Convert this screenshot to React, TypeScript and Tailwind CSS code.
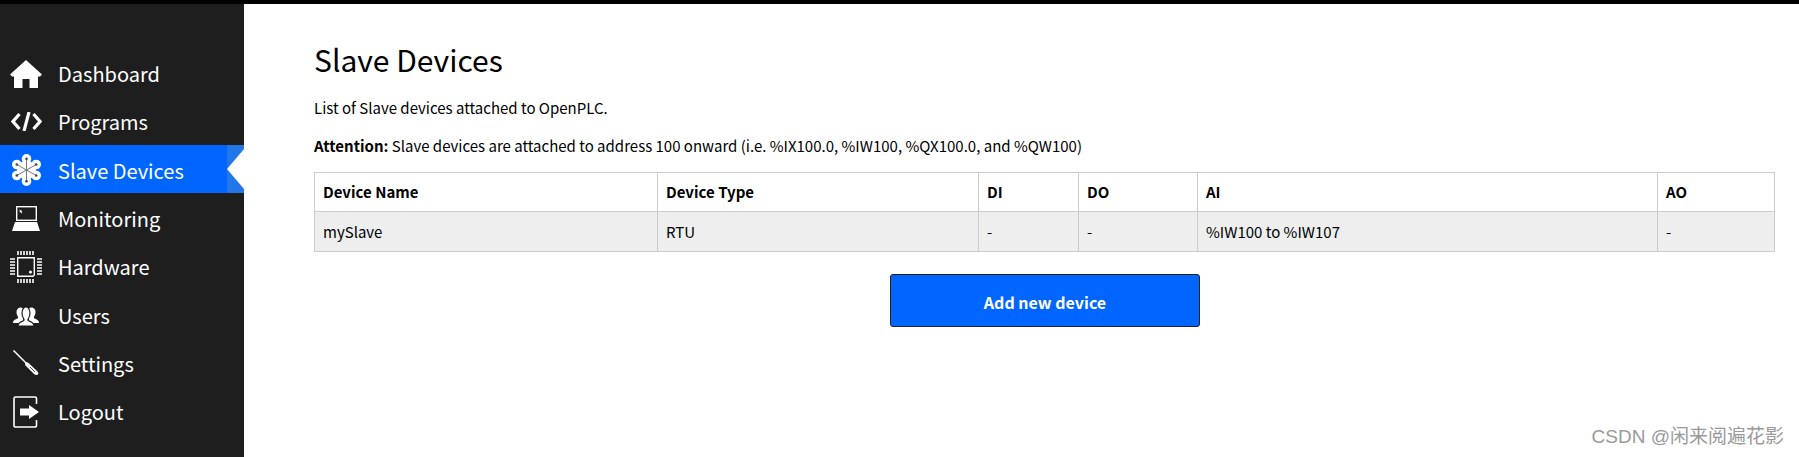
const font = "font-['Noto_Sans_CJK_SC','Noto_Sans',sans-serif]";

function HomeIcon() {
  return (
    <svg viewBox="0 0 32 28" className="h-[28px] w-[32px]">
      <path d="M16 0L32 14.500 30 16.500H28V28H19.500V19H12.500V28H4V16.500H2L0 14.500Z" fill="#fff" />
    </svg>
  );
}

function CodeIcon() {
  return (
    <svg viewBox="0 0 31 19" className="h-[19px] w-[31px]">
      <path d="M8.500 2L2 9.500 8.500 17M22.500 2L29 9.500 22.500 17" fill="none" stroke="#fff" strokeWidth="3.200" />
      <path d="M18 0L13 19" fill="none" stroke="#fff" strokeWidth="3.200" />
    </svg>
  );
}

function SlaveIcon() {
  return (
    <svg viewBox="0 0 29 32" className="h-[32px] w-[29px]">
      <g fill="#fff">
        <circle cx="14.500" cy="4.800" r="4.800" />
        <circle cx="14.500" cy="27.200" r="4.800" />
        <circle cx="4.800" cy="10.500" r="4.800" />
        <circle cx="24.200" cy="10.500" r="4.800" />
        <circle cx="4.800" cy="21.500" r="4.800" />
        <circle cx="24.200" cy="21.500" r="4.800" />
        <circle cx="14.500" cy="16" r="9.500" />
      </g>
      <path d="M14.500 4.800V27.200M4.800 10.500L24.200 21.500M24.200 10.500L4.800 21.500" stroke="#777" strokeWidth="1" />
      <g fill="#444">
        <circle cx="14.500" cy="4.800" r="1.300" />
        <circle cx="14.500" cy="27.200" r="1.300" />
        <circle cx="4.800" cy="10.500" r="1.300" />
        <circle cx="24.200" cy="10.500" r="1.300" />
        <circle cx="4.800" cy="21.500" r="1.300" />
        <circle cx="24.200" cy="21.500" r="1.300" />
      </g>
    </svg>
  );
}

function MonitorIcon() {
  return (
    <svg viewBox="0 0 28 25" className="h-[25px] w-[28px]">
      <rect x="4.700" y="0.700" width="19.600" height="13.600" fill="none" stroke="#fff" strokeWidth="1.400" />
      <path d="M7.500 3.500l3 1.700-1.100.5.8 1.300-.7.4-.8-1.300-.8.8z" fill="#fff" />
      <path d="M3 16H25L28 25H0Z" fill="#fff" />
    </svg>
  );
}

function ChipIcon() {
  return (
    <svg viewBox="0 0 32 32" className="size-[32px]">
      <path d="M7.700 6.700H24.300V24L23 25.300H7.700Z" fill="none" stroke="#fff" strokeWidth="1.400" />
      <circle cx="20.500" cy="21" r="1.600" fill="#fff" />
      <path
        d="M8 0v4M11 0v4M14 0v4M17 0v4M20 0v4M23 0v4M8 28v4M11 28v4M14 28v4M17 28v4M20 28v4M23 28v4M0 8h5M0 11h5M0 14h5M0 17h5M0 20h5M0 23h5M27 8h5M27 11h5M27 14h5M27 17h5M27 20h5M27 23h5"
        stroke="#fff"
        strokeWidth="1.600"
      />
    </svg>
  );
}

function UsersIcon() {
  return (
    <svg viewBox="0 0 26 21" className="h-[21px] w-[26px]">
      <path
        d="M0 18c0-3 2.500-3.500 4.500-4.500.8-.5.8-1.500.2-2.300C4 10.200 3.500 8.700 3.500 7 3.500 4 5.500 2.500 7.500 2.500c1 0 1.900.3 2.500.9V12c0 1 .2 2.500 0 3.500L6 18z"
        fill="#fff"
      />
      <path
        d="M26 18c0-3-2.500-3.500-4.500-4.500-.8-.5-.8-1.500-.2-2.300.7-1 1.200-2.500 1.200-4.200 0-3-2-4.500-4-4.500-1 0-1.900.3-2.500.9V12c0 1-.2 2.500 0 3.500L20 18z"
        fill="#fff"
      />
      <path
        d="M5 21c0-3.500 3-4 5.500-5.200.6-.5.6-1.500.1-2.300-.8-1.200-1.600-3-1.600-5.500C9 4.500 11 2 13 2s4 2.500 4 6c0 2.500-.8 4.300-1.600 5.500-.5.8-.5 1.800.1 2.300C18 17 21 17.500 21 21Z"
        fill="#fff"
        stroke="#1e1e1e"
        strokeWidth="1.200"
      />
    </svg>
  );
}

function ScrewdriverIcon() {
  return (
    <svg viewBox="0 0 26 26" className="size-[26px]">
      <path d="M0.500 0.500L13.500 13.500" stroke="#fff" strokeWidth="1.500" fill="none" />
      <path d="M12 13.500l1.500-1.500 2 1 8.500 8c1.500 1.500 1.800 2.500.8 3.500-1 1-2.500.7-3.800-.5L12.500 15.500z" fill="#fff" />
      <path d="M17 17l5 5" stroke="#1e1e1e" strokeWidth="0.800" />
    </svg>
  );
}

function LogoutIcon() {
  return (
    <svg viewBox="0 0 26 32" className="h-[32px] w-[26px]">
      <path
        d="M23.500 8V2.500A1.500 1.500 0 0 0 22 1H2.500A1.500 1.500 0 0 0 1 2.500v27A1.500 1.500 0 0 0 2.500 31H22a1.500 1.500 0 0 0 1.500-1.500V24"
        fill="none"
        stroke="#fff"
        strokeWidth="1.600"
      />
      <path d="M7 12.500h9V9L26 16 16 23v-3.500H7z" fill="#fff" />
    </svg>
  );
}

const navItems = [
  { label: "Dashboard", icon: <HomeIcon /> },
  { label: "Programs", icon: <CodeIcon /> },
  { label: "Slave Devices", icon: <SlaveIcon />, active: true },
  { label: "Monitoring", icon: <MonitorIcon /> },
  { label: "Hardware", icon: <ChipIcon /> },
  { label: "Users", icon: <UsersIcon /> },
  { label: "Settings", icon: <ScrewdriverIcon /> },
  { label: "Logout", icon: <LogoutIcon /> },
];

const columns = [
  { name: "Device Name", value: "mySlave", width: "w-[343px]" },
  { name: "Device Type", value: "RTU", width: "w-[321px]" },
  { name: "DI", value: "-", width: "w-[100px]" },
  { name: "DO", value: "-", width: "w-[119px]" },
  { name: "AI", value: "%IW100 to %IW107", width: "w-[460px]" },
  { name: "AO", value: "-", width: "w-[117px]" },
];

function Sidebar() {
  return (
    <aside className="w-[244px] shrink-0 bg-[#1e1e1e] pt-[44.400px]">
      {navItems.map((item) => (
        <div
          key={item.label}
          className={
            item.active
              ? "flex h-[48.300px] items-center bg-[#0066ff]"
              : "flex h-[48.300px] items-center"
          }
        >
          <span className="flex w-[52px] shrink-0 justify-center pt-[2px]">{item.icon}</span>
          <span className="ml-[6px] flex-1 pt-[3px] text-[20px] text-white">{item.label}</span>
          {item.active && (
            <span className="flex h-full w-[17px] items-center justify-end bg-[#2176e8]">
              <span className="h-0 w-0 border-y-[20px] border-r-[17px] border-y-transparent border-r-white" />
            </span>
          )}
        </div>
      ))}
    </aside>
  );
}

export default function App() {
  return (
    <div className={`relative flex h-[457px] w-[1799px] flex-col overflow-hidden bg-white text-black proportional-nums ${font}`}>
      <div className="h-[4px] shrink-0 bg-black" />
      <div className="flex flex-1">
        <Sidebar />
        <main className="flex-1 pl-[70px] pr-[25px]">
          <h1 className="mt-[33px] text-[30px] leading-[44px]">Slave Devices</h1>
          <p className="mt-[15px] text-[15px] leading-[24px]">List of Slave devices attached to OpenPLC.</p>
          <p className="mt-[14px] text-[15px] leading-[24px]">
            <b className="font-bold">Attention:</b> Slave devices are attached to address 100 onward (i.e. %IX100.0,
            %IW100, %QX100.0, and %QW100)
          </p>
          <table className="mt-[14px] w-[1460px] table-fixed border-collapse text-[15px]">
            <thead>
              <tr>
                {columns.map((col) => (
                  <th
                    key={col.name}
                    className={`${col.width} h-[39px] border border-[#cccccc] px-[8px] text-left font-bold`}
                  >
                    {col.name}
                  </th>
                ))}
              </tr>
            </thead>
            <tbody>
              <tr className="bg-[#eeeeee]">
                {columns.map((col) => (
                  <td key={col.name} className="h-[40px] border border-[#cccccc] px-[8px] pt-[2px]">
                    {col.value}
                  </td>
                ))}
              </tr>
            </tbody>
          </table>
          <div className="mt-[22px] flex justify-center">
            <button className="ml-[1px] h-[53px] w-[310px] rounded-[3px] border border-[#222222] bg-[#0066ff] pt-[2px] text-[16px] font-bold text-white">
              Add new device
            </button>
          </div>
        </main>
      </div>
      <span className="absolute bottom-[6px] right-[15px] font-['Liberation_Sans','Noto_Sans_CJK_SC',sans-serif] text-[19px] text-[#9a9a9a]">
        CSDN @闲来阅遍花影
      </span>
    </div>
  );
}
